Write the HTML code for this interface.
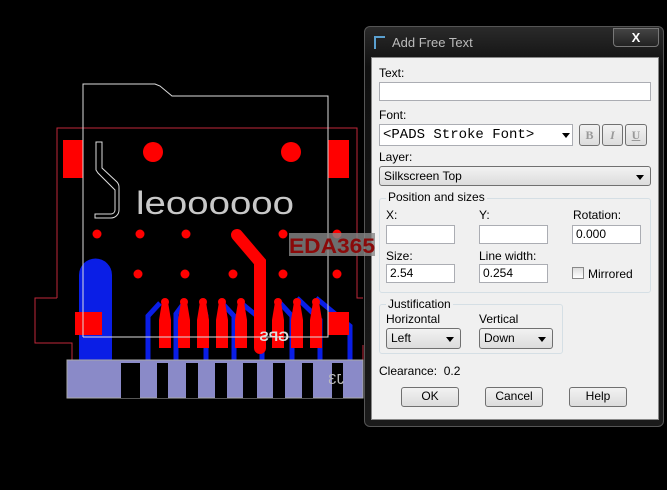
<!DOCTYPE html>
<html><head><meta charset="utf-8"><style>
*{margin:0;padding:0;box-sizing:border-box}
body{width:667px;height:490px;background:#000;position:relative;overflow:hidden;font-family:"Liberation Sans",sans-serif;font-size:12px;color:#000}
.a{position:absolute}
.in{position:absolute;background:#fff;border:1px solid #abadb3}
.lb{position:absolute;font-size:12px;line-height:14px}
.btn{position:absolute;border:1px solid #707070;border-radius:3px;background:linear-gradient(#f2f2f2,#dcdcdc);text-align:center;font-size:12px;line-height:17px}
.cb{position:absolute;border:1px solid #707070;border-radius:3px;background:linear-gradient(#f2f2f2,#dcdcdc);font-size:12px;line-height:19px;padding-left:4px}
.cb:after{content:"";position:absolute;right:6px;top:8px;border:4px solid transparent;border-top:5px solid #000}
.grp{position:absolute;border:1px solid #d5dfe5;border-radius:3px}
.gt{position:absolute;background:#f0f0f0;padding:0 2px;font-size:12px;line-height:14px}
</style></head><body>
<svg class="a" style="left:0;top:0" width="667" height="490">
<polyline points="57,298 57,128 357,128 357,298 363,298" fill="none" stroke="#c0283a" stroke-width="1"/>
<polyline points="57,298 35,298 35,343 72,343 72,397 363,397 363,345" fill="none" stroke="#c0283a" stroke-width="1"/>
<rect x="63" y="140" width="20" height="38" fill="#f00"/>
<rect x="328" y="140" width="21" height="38" fill="#f00"/>
<circle cx="153" cy="152" r="10" fill="#f00"/><circle cx="291" cy="152" r="10" fill="#f00"/>
<g fill="#f00"><circle cx="97" cy="234" r="4.5"/><circle cx="140" cy="234" r="4.5"/><circle cx="186" cy="234" r="4.5"/><circle cx="283" cy="234" r="4.5"/><circle cx="337" cy="234" r="4.5"/>
<circle cx="97" cy="274" r="4.5"/><circle cx="138" cy="274" r="4.5"/><circle cx="185" cy="274" r="4.5"/><circle cx="233" cy="274" r="4.5"/><circle cx="283" cy="274" r="4.5"/><circle cx="337" cy="274" r="4.5"/></g>
<g stroke="#0a1ee6" stroke-width="5" fill="none">
<path d="M160,303 L148,316 L148,360"/><path d="M184,303 L176,314 L176,360"/><path d="M203,303 L206,316 L206,360"/><path d="M222,303 L234,316 L234,360"/><path d="M241,303 L262,320 L262,360"/><path d="M280,303 L292,316 L292,360"/><path d="M297,298 L320,320 L320,360"/><path d="M316,298 L350,326 L350,360"/>
</g>
<path d="M79,275 a16.5,16.5 0 0 1 33,0 L112,360 L79,360 Z" fill="#0a1ee6"/>
<rect x="75" y="312" width="27" height="23" fill="#f00"/>
<rect x="328" y="312" width="21" height="23" fill="#f00"/>
<path d="M237,235 L260,262 L260,348" stroke="#f00" stroke-width="12" fill="none" stroke-linecap="round"/>
<g fill="#f00">
<g id="p"><circle cx="165" cy="302" r="4"/><path d="M162,302 L168,302 L171,320 L171,348 L159,348 L159,320 Z"/></g>
<use href="#p" x="19"/><use href="#p" x="38"/><use href="#p" x="57"/><use href="#p" x="76"/><use href="#p" x="113"/><use href="#p" x="132"/><use href="#p" x="151"/>
</g>
<rect x="67" y="360" width="296" height="38" fill="#8a8ac8" stroke="#aaa" stroke-width="1"/>
<g fill="#000"><rect x="121" y="363" width="19" height="35"/><rect x="157" y="363" width="11" height="35"/><rect x="186" y="363" width="12" height="35"/><rect x="215" y="363" width="12" height="35"/><rect x="243" y="363" width="14" height="35"/><rect x="273" y="363" width="12" height="35"/><rect x="302" y="363" width="11" height="35"/><rect x="332" y="363" width="11" height="35"/></g>
<text x="344" y="384" font-size="15" fill="#bbb" transform="scale(-1,1) translate(-688,0)" font-family="Liberation Sans">J3</text>
<polyline points="83,337 83,84 155,84 160,86 172,96 328,96 328,337 83,337" fill="none" stroke="#ddd" stroke-width="1"/>
<path d="M96,142 L102,142 L102,168 L117,182 a8,8 0 0 1 2,6 L119,210 a8,8 0 0 1 -8,8 L95,218 L95,214 L111,214 a4,4 0 0 0 4,-4 L115,190 L98,173 L96,170 Z" fill="none" stroke="#ddd" stroke-width="1"/>
<text x="136" y="214" font-size="32" fill="#c8c8c8" font-family="Liberation Sans" textLength="158" lengthAdjust="spacingAndGlyphs">leoooooo</text>
<text x="323" y="341" font-size="14" fill="#ddd" font-weight="bold" transform="scale(-1,1) translate(-612,0)" font-family="Liberation Sans">GPS</text>
</svg>
<div class="a" style="left:364px;top:26px;width:300px;height:401px;background:linear-gradient(#2a2a2a,#101010 40px,#1a1a1a);border:1px solid #555;border-radius:6px"></div>
<div class="a" style="left:374px;top:36px;width:11px;height:13px;border:2px solid #5aa0d0;border-bottom:none;border-right:none"></div>
<div class="a" style="left:392px;top:35px;color:#bbb;font-size:13px">Add Free Text</div>
<div class="a" style="left:613px;top:28px;width:46px;height:19px;border:1px solid #777;border-radius:0 0 4px 4px;background:linear-gradient(#444,#222);color:#fff;font-weight:bold;text-align:center;font-size:13px;line-height:18px">X</div>
<div class="a" style="left:371px;top:57px;width:288px;height:363px;background:#f0f0f0;border:1px solid #888"></div>
<div class="lb" style="left:379px;top:66px">Text:</div>
<div class="in" style="left:379px;top:82px;width:272px;height:19px"></div>
<div class="lb" style="left:379px;top:108px">Font:</div>
<div class="in" style="left:379px;top:124px;width:194px;height:22px;font-family:'Liberation Mono',monospace;font-size:14px;line-height:20px;padding-left:3px">&lt;PADS Stroke Font&gt;</div>
<div class="a" style="left:562px;top:133px;border:4px solid transparent;border-top:5px solid #000"></div>
<div class="btn" style="left:579px;top:124px;width:21px;height:22px;color:#999;font-weight:bold;font-family:'Liberation Serif',serif;line-height:20px">B</div>
<div class="btn" style="left:602px;top:124px;width:21px;height:22px;color:#999;font-style:italic;font-weight:bold;font-family:'Liberation Serif',serif;line-height:20px">I</div>
<div class="btn" style="left:625px;top:124px;width:22px;height:22px;color:#999;text-decoration:underline;font-weight:bold;font-family:'Liberation Serif',serif;line-height:20px">U</div>
<div class="lb" style="left:379px;top:150px">Layer:</div>
<div class="cb" style="left:379px;top:166px;width:272px;height:20px;line-height:18px">Silkscreen Top</div>
<div class="grp" style="left:379px;top:198px;width:272px;height:95px"></div>
<div class="gt" style="left:386px;top:190px">Position and sizes</div>
<div class="lb" style="left:386px;top:208px">X:</div>
<div class="lb" style="left:479px;top:208px">Y:</div>
<div class="lb" style="left:573px;top:208px">Rotation:</div>
<div class="in" style="left:386px;top:225px;width:69px;height:19px"></div>
<div class="in" style="left:479px;top:225px;width:69px;height:19px"></div>
<div class="in" style="left:572px;top:225px;width:69px;height:19px;padding-left:3px;line-height:16px">0.000</div>
<div class="lb" style="left:386px;top:249px">Size:</div>
<div class="lb" style="left:479px;top:249px">Line width:</div>
<div class="in" style="left:386px;top:264px;width:69px;height:19px;padding-left:3px;line-height:16px">2.54</div>
<div class="in" style="left:479px;top:264px;width:69px;height:19px;padding-left:3px;line-height:16px">0.254</div>
<div class="a" style="left:572px;top:267px;width:12px;height:12px;border:1px solid #888;background:linear-gradient(#ddd,#fff)"></div>
<div class="lb" style="left:588px;top:267px">Mirrored</div>
<div class="grp" style="left:379px;top:304px;width:184px;height:50px"></div>
<div class="gt" style="left:386px;top:297px">Justification</div>
<div class="lb" style="left:386px;top:312px">Horizontal</div>
<div class="lb" style="left:479px;top:312px">Vertical</div>
<div class="cb" style="left:386px;top:328px;width:75px;height:21px">Left</div>
<div class="cb" style="left:479px;top:328px;width:74px;height:21px">Down</div>
<div class="lb" style="left:379px;top:364px">Clearance:&nbsp; 0.2</div>
<div class="btn" style="left:401px;top:387px;width:58px;height:20px">OK</div>
<div class="btn" style="left:485px;top:387px;width:58px;height:20px">Cancel</div>
<div class="btn" style="left:569px;top:387px;width:58px;height:20px">Help</div>
<svg class="a" style="left:289px;top:233px" width="86" height="23">
<rect x="0" y="0" width="86" height="23" fill="#888" fill-opacity="0.8"/>
<text x="0" y="20" font-size="21" font-weight="bold" fill="#8a0a0a" font-family="Liberation Sans" textLength="86" lengthAdjust="spacingAndGlyphs">EDA365</text>
</svg>
</body></html>
